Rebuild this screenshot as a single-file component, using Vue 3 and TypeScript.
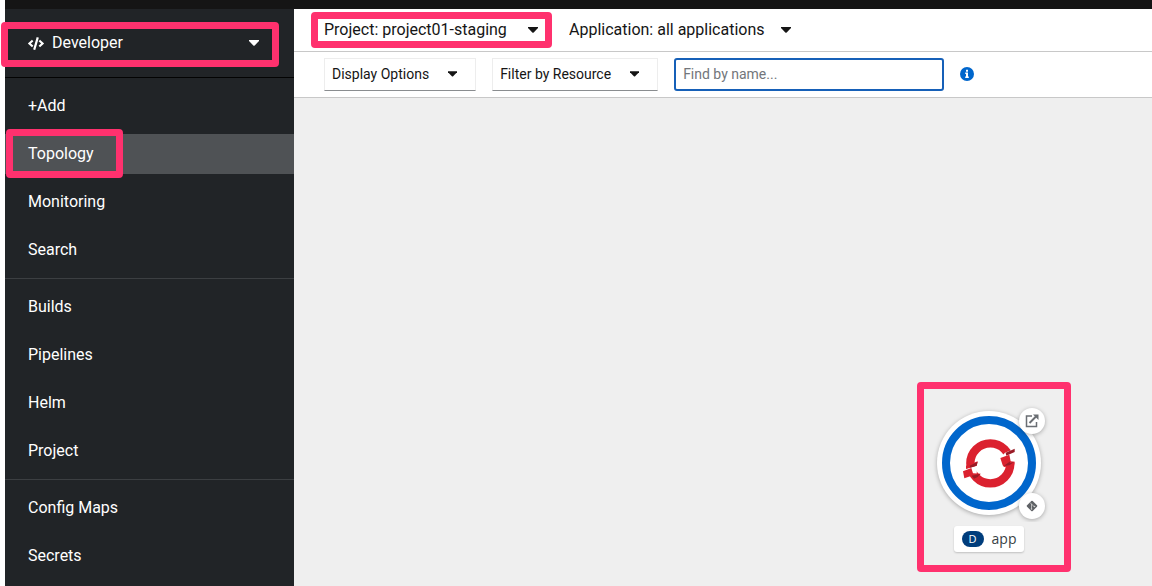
<script setup lang="ts">
import { ref } from 'vue'

const sections: string[][] = [
  ['+Add', 'Topology', 'Monitoring', 'Search'],
  ['Builds', 'Pipelines', 'Helm', 'Project'],
  ['Config Maps', 'Secrets'],
]
const active = ref('Topology')
const query = ref('')
</script>

<template>
  <div class="page">
    <header class="masthead"></header>
    <div class="shell">
      <aside class="sidebar">
        <div class="perspective">
          <svg class="code" viewBox="0 0 640 512" aria-hidden="true">
            <path d="M279 511l-61-18c-6-2-10-8-8-15L346 9c2-6 9-10 15-8l61 18c6 2 10 8 8 15L294 503c-2 6-8 10-15 8zM165 400l43-47c5-5 4-13-1-17l-91-80 91-80c5-4 6-12 1-17l-43-47c-5-5-12-5-17 0L4 247c-5 5-5 13 0 18l144 135c5 4 12 4 17 0zm327 0l144-135c5-5 5-13 0-18L492 112c-5-5-12-5-17 0l-43 47c-5 5-4 13 1 17l91 80-91 80c-5 4-6 12-1 17l43 47c5 5 12 5 17 0z" fill="currentColor" />
          </svg>
          <select class="perspective-select" aria-label="Perspective">
            <option>Developer</option>
          </select>
          <svg class="caret" viewBox="0 0 10 6" aria-hidden="true"><path d="M0 0h10v1L5.700 5.500q-.7.600-1.400 0L0 1z" fill="currentColor" /></svg>
          <span class="mark mark-perspective"></span>
        </div>
        <nav aria-label="Main">
          <ul v-for="(items, i) in sections" :key="i" class="section">
            <li v-for="item in items" :key="item" class="item">
              <a href="#" class="link" :class="{ active: item === active }" @click.prevent="active = item">{{ item }}</a>
              <span v-if="item === 'Topology'" class="mark mark-topology"></span>
            </li>
          </ul>
        </nav>
      </aside>

      <main class="content">
        <div class="context">
          <div class="picker project">
            <select class="picker-select" aria-label="Project">
              <option>Project: project01-staging</option>
            </select>
            <svg class="caret" viewBox="0 0 10 6" aria-hidden="true"><path d="M0 0h10v1L5.700 5.500q-.7.600-1.400 0L0 1z" fill="currentColor" /></svg>
            <span class="mark mark-project"></span>
          </div>
          <div class="picker">
            <select class="picker-select" aria-label="Application">
              <option>Application: all applications</option>
            </select>
            <svg class="caret" viewBox="0 0 10 6" aria-hidden="true"><path d="M0 0h10v1L5.700 5.500q-.7.600-1.400 0L0 1z" fill="currentColor" /></svg>
          </div>
        </div>

        <div class="toolbar">
          <button type="button" class="toggle" aria-haspopup="menu">
            Display Options
            <svg class="caret small" viewBox="0 0 10 6" aria-hidden="true"><path d="M0 0h10v1L5.700 5.500q-.7.600-1.400 0L0 1z" fill="currentColor" /></svg>
          </button>
          <button type="button" class="toggle" aria-haspopup="menu">
            Filter by Resource
            <svg class="caret small" viewBox="0 0 10 6" aria-hidden="true"><path d="M0 0h10v1L5.700 5.500q-.7.600-1.400 0L0 1z" fill="currentColor" /></svg>
          </button>
          <input v-model="query" class="find" type="text" placeholder="Find by name..." aria-label="Find by name" />
          <button type="button" class="info" aria-label="Search help">
            <svg viewBox="0 0 14 14" width="14" height="14" aria-hidden="true">
              <circle cx="7" cy="7" r="7" fill="#06c" />
              <path d="M6 2.700h2v2H6zM5.200 5.600H8v3.900h.8V11H5.200V9.500H6V7h-.8z" fill="#fff" />
            </svg>
          </button>
        </div>

        <section class="canvas" aria-label="Topology">
          <div class="node">
            <svg class="node-art" viewBox="0 0 154 140" width="154" height="140" aria-hidden="true">
              <circle class="raised" cx="72" cy="81" r="52" fill="#fff" />
              <circle cx="72" cy="81" r="43" fill="#fff" stroke="#06c" stroke-width="8" />
              <g transform="translate(43 54) scale(.33333)">
                <circle cx="91" cy="82" r="60" fill="none" stroke="#db212f" stroke-width="25" />
                <path d="M8 101L52 87L50 114L33 119L12 128z" fill="#fff" />
                <path d="M135 50L170 36V77L130 90L120 66z" fill="#fff" />
                <path d="M18 89L53 76L50 89L18 99z" fill="#db212f" />
                <path d="M29 89L53 77L50 89L31 95z" fill="#991b26" />
                <path d="M9 106L34 96L39 112L62 113L56 122L33 120L13 127z" fill="#db212f" />
                <path d="M35 119L61 113L53 123L42 128z" fill="#991b26" />
                <path d="M137 50L164 38V48L139 59z" fill="#991b26" />
                <path d="M121 66L148 56L152 76L164 77L162 90L132 93L128 88z" fill="#db212f" />
                <path d="M131 90L151 76L149 82L163 77L148 88z" fill="#991b26" />
              </g>
              <circle class="raised" cx="115" cy="39" r="13" fill="#fff" />
              <g fill="none" stroke="#6a6e73" stroke-width="1.500">
                <path d="M115 34h-5.500v10.500h10V40" />
                <path d="M112.500 41l7-7" stroke-width="2" />
                <path d="M116 32.500h5.500V38z" fill="#6a6e73" stroke="none" />
              </g>
              <circle class="raised" cx="115" cy="124" r="13" fill="#fff" />
              <rect x="111" y="120" width="8" height="8" rx="1" fill="#5f6266" transform="rotate(45 115 124)" />
              <path d="M113 120.500l1.500 1.500v5M114.500 122l3 3" fill="none" stroke="#d2d2d2" stroke-width=".8" />
              <circle cx="114.500" cy="127" r=".8" fill="#d2d2d2" />
              <circle cx="117.500" cy="124.500" r=".8" fill="#d2d2d2" />
            </svg>
            <div class="node-label"><span class="kind">D</span>app</div>
            <span class="mark mark-node"></span>
          </div>
        </section>
      </main>
    </div>
  </div>
</template>

<style>
body {
  margin: 0;
  background: #fff;
}
</style>

<style scoped>
.page {
  box-sizing: border-box;
  display: flex;
  flex-direction: column;
  min-height: 100vh;
  padding-left: 5px;
  color: #151515;
  font: 16px/24px Roboto, "Noto Sans", sans-serif;
}
.masthead {
  height: 9px;
  background: #151515;
}
.shell {
  display: flex;
  flex: 1;
}
.sidebar {
  flex: 0 0 289px;
  background: #212427;
  color: #fff;
}
select,
button,
input {
  margin: 0;
  border: 0;
  border-radius: 0;
  background: transparent;
  color: inherit;
  font: inherit;
}
select {
  appearance: none;
  padding: 0;
  outline: none;
}
.perspective {
  position: relative;
  display: flex;
  align-items: center;
  gap: 8px;
  height: 68px;
  padding: 0 35px 0 23px;
  box-sizing: border-box;
}
.perspective-select {
  flex: 1;
}
.code {
  width: 16px;
  height: 13px;
}
.caret {
  flex: none;
  width: 10px;
  height: 6px;
}
.caret.small {
  width: 9px;
}
.section {
  display: flex;
  flex-direction: column;
  gap: 8px;
  margin: 0;
  padding: 8px 0;
  border-top: 1px solid #3c3f42;
  list-style: none;
}
.section:first-child {
  border-top-color: #030303;
}
.item {
  position: relative;
}
.link {
  display: block;
  padding: 8px 23px;
  color: #fff;
  text-decoration: none;
}
.link.active {
  background: #4f5255;
}
.mark {
  position: absolute;
  box-sizing: border-box;
  border: 7px solid #ff316e;
  border-radius: 4px;
  pointer-events: none;
}
.mark-perspective {
  inset: 13px 15px 10px -4px;
}
.mark-topology {
  top: -5px;
  left: 1px;
  width: 117px;
  height: 49px;
}
.mark-project {
  inset: -6px -14px -6px -13px;
}
.mark-node {
  inset: 0;
}
.content {
  display: flex;
  flex: 1;
  flex-direction: column;
  min-width: 0;
}
.context {
  display: flex;
  align-items: center;
  gap: 31px;
  height: 42px;
  padding: 0 30px;
  border-bottom: 1px solid #c8c8c8;
}
.picker {
  position: relative;
  display: flex;
  align-items: center;
  gap: 16px;
}
.picker.project {
  gap: 21px;
}
.toolbar {
  display: flex;
  align-items: center;
  gap: 16px;
  height: 45px;
  padding: 0 30px;
  border-bottom: 1px solid #c8c8c8;
  font-size: 14px;
}
.toggle {
  display: flex;
  align-items: center;
  gap: 19px;
  height: 33px;
  padding: 0 18px 2px 7px;
  border: 1px solid #ededed;
  border-bottom-color: #8a8d90;
}
.find {
  box-sizing: border-box;
  width: 270px;
  height: 33px;
  padding: 0 7px 2px;
  border: 2px solid #1660b8;
  border-radius: 3px;
  outline: none;
}
.find::placeholder {
  color: #72767b;
  opacity: 1;
}
.info {
  display: flex;
  padding: 0 0 2px;
}
.canvas {
  position: relative;
  flex: 1;
  background: #efefef;
}
.node {
  position: absolute;
  top: 284px;
  left: 623px;
  display: flex;
  flex-direction: column;
  align-items: center;
  width: 154px;
  height: 190px;
}
.node-art {
  display: block;
}
.raised {
  filter: drop-shadow(0 1px 2px rgb(3 3 3 / 30%));
}
.node-label {
  display: flex;
  align-items: center;
  gap: 8px;
  height: 26px;
  margin: 4px 10px 0 0;
  padding: 0 8px;
  border-radius: 3px;
  background: #fff;
  box-shadow: 0 1px 2px rgb(3 3 3 / 20%);
  color: #393f44;
  font: 14px/20px "Open Sans", "Noto Sans", sans-serif;
}
.kind {
  width: 22px;
  border-radius: 8px;
  background: #003d7c;
  color: #fff;
  font-size: 11px;
  line-height: 16px;
  text-align: center;
}
</style>
